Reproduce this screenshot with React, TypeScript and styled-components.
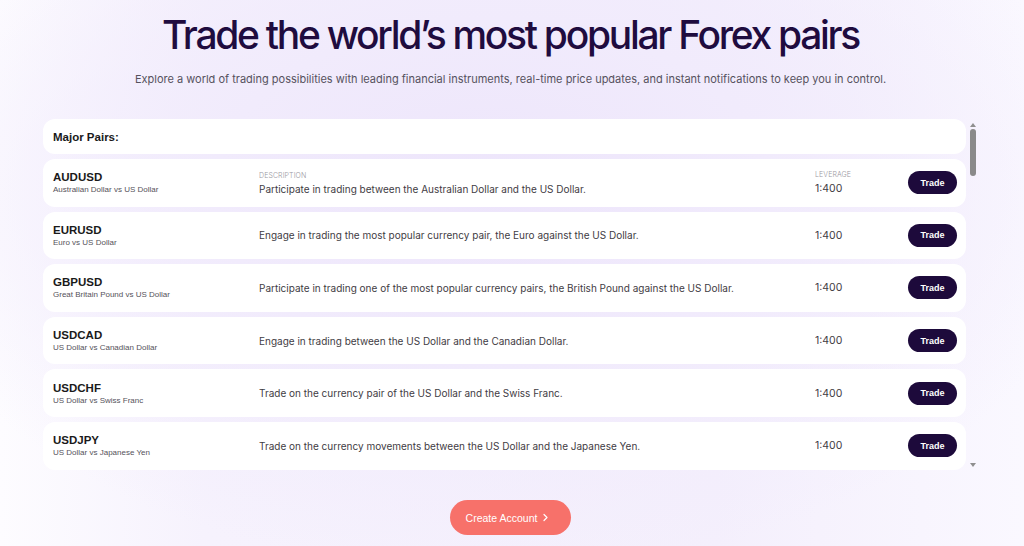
import React from "react";
import styled, { createGlobalStyle } from "styled-components";

const GlobalStyle = createGlobalStyle`
  html, body {
    margin: 0;
    padding: 0;
  }
  body {
    font-family: Inter, "Noto Sans", sans-serif;
    background: #fbfaff;
  }
`;

const Page = styled.main`
  min-height: 546px;
  box-sizing: border-box;
  padding: 11px 3px 0 0;
  display: flex;
  flex-direction: column;
  align-items: center;
  background:
    radial-gradient(ellipse 60% 70% at 48% 35%, #ede5fb 0%, #f1ebfc 45%, rgba(248, 246, 254, 0) 100%),
    linear-gradient(90deg, #fdfcff 0%, #f6f2fd 20%, #f4effc 70%, #faf8ff 100%);
`;

const Title = styled.h1`
  margin: 0;
  font-family: Inter, sans-serif;
  font-weight: 500;
  font-size: 39px;
  line-height: 48px;
  letter-spacing: -2.3px;
  color: #1f0c3f;
  text-align: center;
`;

const Lead = styled.p`
  margin: 12px 0 0;
  font-family: Inter, sans-serif;
  font-size: 11px;
  line-height: 16px;
  color: #56525e;
  text-align: center;
`;

const Frame = styled.div`
  margin-top: 32px;
  width: 935px;
  height: 352px;
  display: flex;
  gap: 1px;
`;

const ListBox = styled.div`
  flex: 1;
  overflow: hidden;
  display: flex;
  flex-direction: column;
  gap: 5px;
`;

const Rail = styled.div`
  width: 11px;
  display: flex;
  flex-direction: column;
  align-items: center;
  padding: 4px 0 4px;
  box-sizing: border-box;
`;

const Arrow = styled.span<{ $down?: boolean }>`
  width: 0;
  height: 0;
  border-left: 3px solid transparent;
  border-right: 3px solid transparent;
  ${(p) => (p.$down ? "border-top: 4px solid #8f8f8f;" : "border-bottom: 4px solid #8f8f8f;")}
  ${(p) => (p.$down ? "margin-top: auto;" : "")}
`;

const Thumb = styled.span`
  margin-top: 2px;
  width: 6px;
  height: 47px;
  border-radius: 3px;
  background: #8a8a8a;
`;

const GroupHead = styled.div`
  flex: 0 0 35px;
  display: flex;
  align-items: center;
  padding-left: 10px;
  background: #ffffff;
  border-radius: 12px;
  font-family: "Liberation Sans", Arial, sans-serif;
  font-weight: 700;
  font-size: 11.5px;
  color: #1a1a1a;
`;

const Row = styled.div`
  flex: 0 0 47.6px;
  display: grid;
  grid-template-columns: 206px 1fr 93px 49px;
  align-items: center;
  padding: 0 9px 0 10px;
  background: #ffffff;
  border-radius: 12px;
`;

const Pair = styled.div`
  display: flex;
  flex-direction: column;
  gap: 2px;
`;

const Symbol = styled.span`
  font-family: "Liberation Sans", Arial, sans-serif;
  font-weight: 700;
  font-size: 11.5px;
  color: #1a1a1a;
`;

const PairName = styled.span`
  font-family: "Liberation Sans", Arial, sans-serif;
  font-size: 8px;
  color: #55525a;
`;

const Cell = styled.div`
  display: flex;
  flex-direction: column;
  gap: 3px;
`;

const Label = styled.span`
  font-family: Inter, sans-serif;
  font-size: 7px;
  font-weight: 300;
  letter-spacing: 0.1px;
  text-transform: uppercase;
  color: #9a97a0;
`;

const Value = styled.span<{ $size?: number }>`
  font-family: Inter, sans-serif;
  font-size: ${(p) => p.$size ?? 10}px;
  color: #3f3c44;
  white-space: nowrap;
`;

const TradeButton = styled.button`
  width: 49px;
  height: 23px;
  padding: 0;
  border: none;
  border-radius: 12px;
  background: #1d0a3b;
  color: #ffffff;
  font-family: "Liberation Sans", Arial, sans-serif;
  font-weight: 700;
  font-size: 9px;
  cursor: pointer;
`;

const CtaButton = styled.button`
  margin-top: 29px;
  width: 121px;
  height: 35px;
  padding: 0 6px 0 0;
  border: none;
  border-radius: 18px;
  background: #f7716a;
  color: #ffffff;
  font-family: "Liberation Sans", Arial, sans-serif;
  font-size: 10.5px;
  display: flex;
  align-items: center;
  justify-content: center;
  gap: 5px;
  cursor: pointer;
`;

type Instrument = { code: string; name: string; text: string };

const groups: { title: string; items: Instrument[] }[] = [
  {
    title: "Major Pairs:",
    items: [
      { code: "AUDUSD", name: "Australian Dollar vs US Dollar", text: "Participate in trading between the Australian Dollar and the US Dollar." },
      { code: "EURUSD", name: "Euro vs US Dollar", text: "Engage in trading the most popular currency pair, the Euro against the US Dollar." },
      { code: "GBPUSD", name: "Great Britain Pound vs US Dollar", text: "Participate in trading one of the most popular currency pairs, the British Pound against the US Dollar." },
      { code: "USDCAD", name: "US Dollar vs Canadian Dollar", text: "Engage in trading between the US Dollar and the Canadian Dollar." },
      { code: "USDCHF", name: "US Dollar vs Swiss Franc", text: "Trade on the currency pair of the US Dollar and the Swiss Franc." },
      { code: "USDJPY", name: "US Dollar vs Japanese Yen", text: "Trade on the currency movements between the US Dollar and the Japanese Yen." },
      { code: "NZDUSD", name: "New Zealand Dollar vs US Dollar", text: "Trade the New Zealand Dollar against the US Dollar." },
    ],
  },
];

const Chevron = () => (
  <svg width="7" height="9" viewBox="0 0 7 9" fill="none">
    <path d="M2 1.5 5 4.5 2 7.5" stroke="#ffffff" strokeWidth="1.2" strokeLinecap="round" strokeLinejoin="round" />
  </svg>
);

const App = () => {
  return (
    <>
      <GlobalStyle />
      <Page>
        <Title>Trade the world’s most popular Forex pairs</Title>
        <Lead>
          Explore a world of trading possibilities with leading financial instruments, real-time price updates, and
          instant notifications to keep you in control.
        </Lead>
        <Frame>
          <ListBox>
            {groups.map((group) => (
              <React.Fragment key={group.title}>
                <GroupHead>{group.title}</GroupHead>
                {group.items.map((item, i) => (
                  <Row key={item.code}>
                    <Pair>
                      <Symbol>{item.code}</Symbol>
                      <PairName>{item.name}</PairName>
                    </Pair>
                    <Cell>
                      {i === 0 && <Label>Description</Label>}
                      <Value>{item.text}</Value>
                    </Cell>
                    <Cell>
                      {i === 0 && <Label>Leverage</Label>}
                      <Value $size={10.5}>1:400</Value>
                    </Cell>
                    <TradeButton>Trade</TradeButton>
                  </Row>
                ))}
              </React.Fragment>
            ))}
          </ListBox>
          <Rail>
            <Arrow />
            <Thumb />
            <Arrow $down />
          </Rail>
        </Frame>
        <CtaButton>
          Create Account <Chevron />
        </CtaButton>
      </Page>
    </>
  );
};

export default App;
